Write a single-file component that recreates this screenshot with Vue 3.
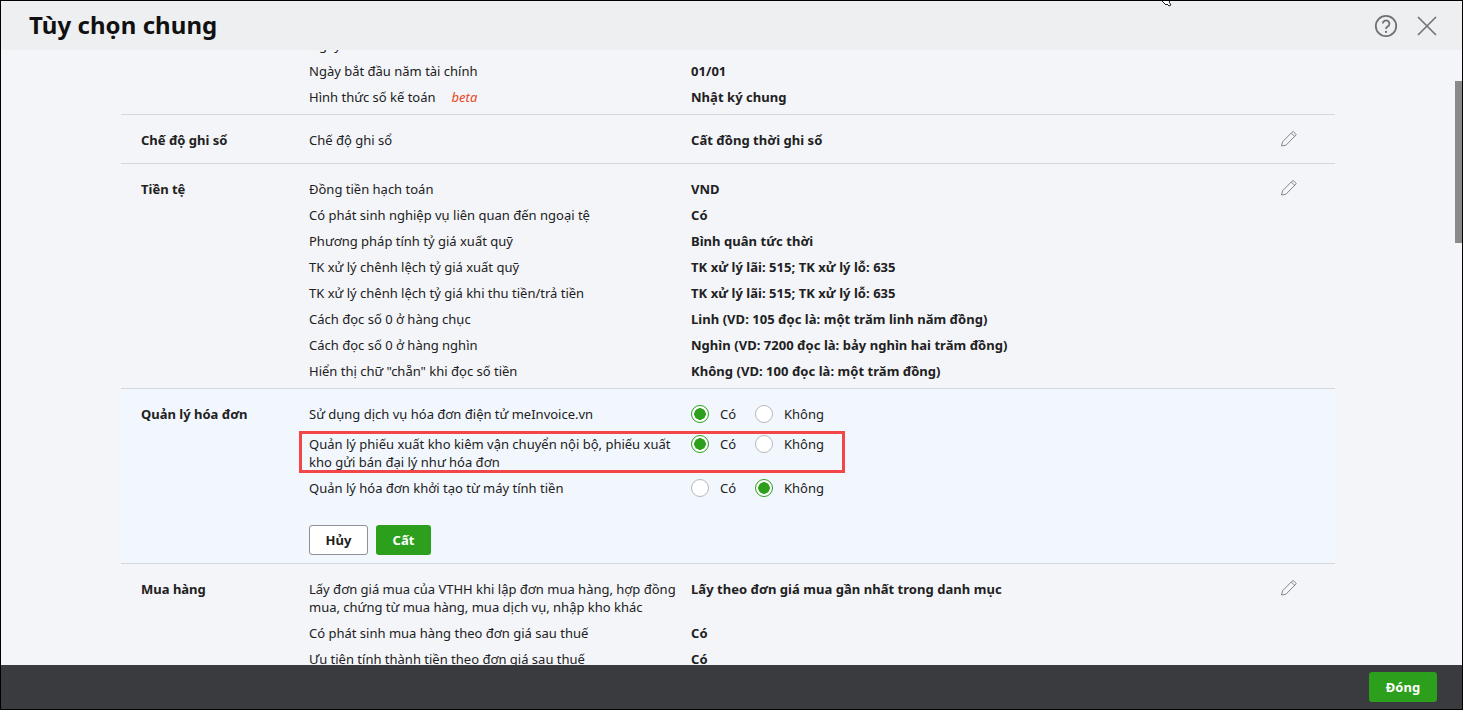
<script setup>
const plainTop = [
  { label: 'Ngày bắt đầu', value: '01/01/2023' },
  { label: 'Ngày bắt đầu năm tài chính', value: '01/01' },
  { label: 'Hình thức số kế toán', value: 'Nhật ký chung', beta: true },
]
const currency = [
  { label: 'Đồng tiền hạch toán', value: 'VND' },
  { label: 'Có phát sinh nghiệp vụ liên quan đến ngoại tệ', value: 'Có' },
  { label: 'Phương pháp tính tỷ giá xuất quỹ', value: 'Bình quân tức thời' },
  { label: 'TK xử lý chênh lệch tỷ giá xuất quỹ', value: 'TK xử lý lãi: 515; TK xử lý lỗ: 635' },
  { label: 'TK xử lý chênh lệch tỷ giá khi thu tiền/trả tiền', value: 'TK xử lý lãi: 515; TK xử lý lỗ: 635' },
  { label: 'Cách đọc số 0 ở hàng chục', value: 'Linh (VD: 105 đọc là: một trăm linh năm đồng)' },
  { label: 'Cách đọc số 0 ở hàng nghìn', value: 'Nghìn (VD: 7200 đọc là: bảy nghìn hai trăm đồng)' },
  { label: 'Hiển thị chữ "chẵn" khi đọc số tiền', value: 'Không (VD: 100 đọc là: một trăm đồng)' },
]
const invoice = [
  { label: 'Sử dụng dịch vụ hóa đơn điện tử meInvoice.vn', yes: true },
  { label: 'Quản lý phiếu xuất kho kiêm vận chuyển nội bộ, phiếu xuất kho gửi bán đại lý như hóa đơn', yes: true, marked: true },
  { label: 'Quản lý hóa đơn khởi tạo từ máy tính tiền', yes: false },
]
const purchase = [
  { label: 'Lấy đơn giá mua của VTHH khi lập đơn mua hàng, hợp đồng mua, chứng từ mua hàng, mua dịch vụ, nhập kho khác', value: 'Lấy theo đơn giá mua gần nhất trong danh mục' },
  { label: 'Có phát sinh mua hàng theo đơn giá sau thuế', value: 'Có' },
  { label: 'Ưu tiên tính thành tiền theo đơn giá sau thuế', value: 'Có' },
]
const pencil = 'M1.5 16 L2.6 11.8 L11.6 2.6 L13.2 1.4 L16.2 4.4 L15 6 L6 15.2 Z M11.3 3 L14.7 6.4'
</script>

<template>
  <div class="window">
    <header class="head">
      <h1 class="title">Tùy chọn chung</h1>
      <svg class="cursor" width="12" height="6" viewBox="0 0 12 6"><path d="M1 0 L5 4 L6 3 L8 5 L10 4 L8 1 L9 0" fill="#fff" stroke="#222" stroke-width="1"/></svg>
      <div class="head-actions">
        <svg width="24" height="24" viewBox="0 0 24 24" fill="none" stroke="#6f7175">
          <circle cx="12" cy="12" r="10.2" stroke-width="1.8"/>
          <path d="M8.8 9.6 A3.3 3.2 0 1 1 13.8 12.4 Q12 13.3 12 15" stroke-width="1.8"/>
          <circle cx="12" cy="17.9" r="1.1" fill="#6f7175" stroke="none"/>
        </svg>
        <svg width="20" height="20" viewBox="0 0 20 20" fill="none" stroke="#6f7175" stroke-width="1.6"><path d="M1 1 L19 19 M19 1 L1 19"/></svg>
      </div>
    </header>

    <main class="body">
      <div class="scroll-bar"></div>
      <div class="content">
        <section class="group first">
          <div class="group-name"></div>
          <div class="rows">
            <div v-for="r in plainTop" :key="r.label" class="row">
              <div class="label">{{ r.label }}<em v-if="r.beta" class="beta">beta</em></div>
              <div class="value">{{ r.value }}</div>
            </div>
          </div>
        </section>

        <section class="group roomy">
          <div class="group-name">Chế độ ghi sổ</div>
          <div class="rows">
            <div class="row">
              <div class="label">Chế độ ghi sổ</div>
              <div class="value">Cất đồng thời ghi sổ</div>
            </div>
          </div>
          <svg class="pencil" width="18" height="18" viewBox="0 0 18 18" fill="none" stroke="#85878b"><path :d="pencil"/></svg>
        </section>

        <section class="group">
          <div class="group-name">Tiền tệ</div>
          <div class="rows">
            <div v-for="r in currency" :key="r.label" class="row">
              <div class="label">{{ r.label }}</div>
              <div class="value">{{ r.value }}</div>
            </div>
          </div>
          <svg class="pencil" width="18" height="18" viewBox="0 0 18 18" fill="none" stroke="#85878b"><path :d="pencil"/></svg>
        </section>

        <section class="group editing">
          <div class="group-name">Quản lý hóa đơn</div>
          <div class="rows">
            <div v-for="r in invoice" :key="r.label" class="row" :class="{ marked: r.marked }">
              <div class="label">{{ r.label }}</div>
              <div class="choices">
                <span class="choice"><i class="radio" :class="{ on: r.yes }"></i>Có</span>
                <span class="choice"><i class="radio" :class="{ on: !r.yes }"></i>Không</span>
              </div>
            </div>
            <div class="buttons">
              <button class="btn ghost">Hủy</button>
              <button class="btn green">Cất</button>
            </div>
          </div>
        </section>

        <section class="group last">
          <div class="group-name">Mua hàng</div>
          <div class="rows">
            <div v-for="r in purchase" :key="r.label" class="row">
              <div class="label">{{ r.label }}</div>
              <div class="value">{{ r.value }}</div>
            </div>
          </div>
          <svg class="pencil" width="18" height="18" viewBox="0 0 18 18" fill="none" stroke="#85878b"><path :d="pencil"/></svg>
        </section>
      </div>
    </main>

    <footer class="foot">
      <button class="btn green close">Đóng</button>
    </footer>
  </div>
</template>

<style>
html, body { margin: 0; padding: 0; overflow: hidden; }
</style>

<style scoped>
.window {
  box-sizing: border-box;
  width: 1463px;
  height: 710px;
  border: 1px solid #000;
  display: flex;
  flex-direction: column;
  font-family: "Noto Sans", sans-serif;
  font-size: 13px;
  line-height: 18px;
  color: #212121;
  background: #f4f5f9;
  overflow: hidden;
}
.head {
  flex: 0 0 49px;
  position: relative;
  display: flex;
  align-items: center;
  justify-content: space-between;
  padding: 0 25px 0 28px;
  background: #eeeff1;
}
.title {
  margin: 0 0 2px;
  font-size: 24px;
  line-height: 32px;
  font-weight: 700;
  letter-spacing: 0.07px;
  color: #111;
}
.cursor { position: absolute; left: 1160px; top: 0; }
.head-actions { display: flex; align-items: center; gap: 19px; }
.body {
  flex: 1;
  min-height: 0;
  position: relative;
  overflow: hidden;
}
.scroll-bar {
  position: absolute;
  right: 0;
  top: 31px;
  width: 7px;
  height: 162px;
  background: #8a8a8a;
}
.content {
  width: 1214px;
  margin: -18px 0 0 120px;
}
.group {
  position: relative;
  display: flex;
  padding: 12px 0 4px;
  border-top: 1px solid #d5d7de;
}
.group.first { border-top: 0; padding-top: 0; }
.group.roomy { padding-bottom: 10px; }
.group-name {
  flex: 0 0 188px;
  box-sizing: border-box;
  padding: 4px 0 4px 20px;
  font-weight: 700;
}
.rows { flex: 1; min-width: 0; }
.row {
  position: relative;
  display: flex;
  padding: 4px 0;
}
.label {
  flex: 0 0 370px;
  margin-right: 12px;
}
.value { font-weight: 700; letter-spacing: 0.04px; }
.beta {
  margin-left: 16px;
  font-style: italic;
  color: #e8471f;
}
.pencil { position: absolute; right: 37px; top: 15px; }
.editing { background: #f2f7fe; padding-bottom: 8px; }
.choices { display: flex; gap: 20px; }
.choice {
  display: inline-flex;
  align-items: flex-start;
  width: 44px;
}
.choice + .choice { width: auto; }
.radio {
  box-sizing: border-box;
  flex: none;
  width: 18px;
  height: 18px;
  margin-right: 11px;
  border: 1px solid #b5b7bb;
  border-radius: 50%;
  background: #fff;
}
.radio.on {
  border-color: #2ca01c;
  background: radial-gradient(circle, #2ca01c 0 5.5px, #fff 6px);
}
.row.marked { padding-top: 8px; }
.marked::after {
  content: "";
  position: absolute;
  left: -10px;
  top: 4px;
  width: 546px;
  height: 42px;
  box-sizing: border-box;
  border: 3px solid #f44549;
  pointer-events: none;
}
.buttons {
  display: flex;
  gap: 8px;
  margin-top: 24px;
}
.btn {
  box-sizing: border-box;
  height: 30px;
  padding: 0;
  border-radius: 3px;
  font-family: inherit;
  font-size: 13px;
  font-weight: 700;
}
.ghost {
  width: 59px;
  background: #fff;
  border: 1px solid #8d9096;
  color: #212121;
}
.green {
  width: 55px;
  background: #2ca01c;
  border: 0;
  color: #fff;
}
.foot {
  flex: 0 0 44px;
  display: flex;
  align-items: center;
  justify-content: flex-end;
  padding-right: 25px;
  background: #393b3f;
  position: relative;
  z-index: 1;
}
.close { width: 68px; height: 30px; }
</style>
